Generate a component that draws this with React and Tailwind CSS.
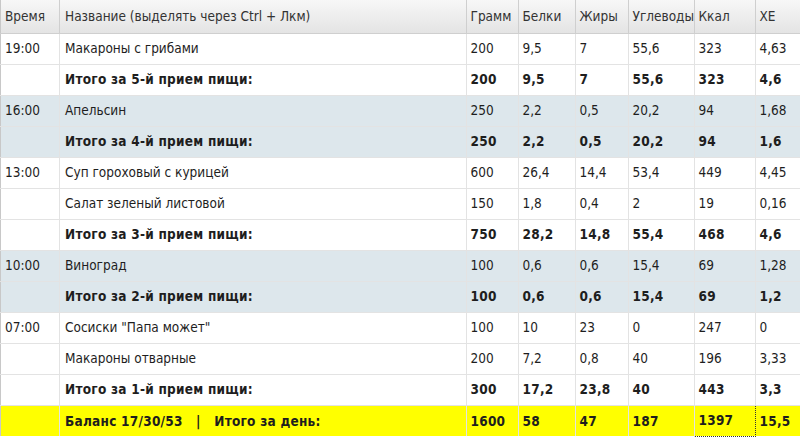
import React from "react";

const rows = [
  { t: "19:00", n: "Макароны с грибами", v: ["200", "9,5", "7", "55,6", "323", "4,63"] },
  { n: "Итого за 5-й прием пищи:", v: ["200", "9,5", "7", "55,6", "323", "4,6"], total: true },
  { t: "16:00", n: "Апельсин", v: ["250", "2,2", "0,5", "20,2", "94", "1,68"], blue: true },
  { n: "Итого за 4-й прием пищи:", v: ["250", "2,2", "0,5", "20,2", "94", "1,6"], total: true, blue: true },
  { t: "13:00", n: "Суп гороховый с курицей", v: ["600", "26,4", "14,4", "53,4", "449", "4,45"] },
  { n: "Салат зеленый листовой", v: ["150", "1,8", "0,4", "2", "19", "0,16"] },
  { n: "Итого за 3-й прием пищи:", v: ["750", "28,2", "14,8", "55,4", "468", "4,6"], total: true },
  { t: "10:00", n: "Виноград", v: ["100", "0,6", "0,6", "15,4", "69", "1,28"], blue: true },
  { n: "Итого за 2-й прием пищи:", v: ["100", "0,6", "0,6", "15,4", "69", "1,2"], total: true, blue: true },
  { t: "07:00", n: "Сосиски \"Папа может\"", v: ["100", "10", "23", "0", "247", "0"] },
  { n: "Макароны отварные", v: ["200", "7,2", "0,8", "40", "196", "3,33"] },
  { n: "Итого за 1-й прием пищи:", v: ["300", "17,2", "23,8", "40", "443", "3,3"], total: true },
];

const headers = ["Грамм", "Белки", "Жиры", "Углеводы", "Ккал", "ХЕ"];
const widths = ["w-[52px]", "w-[57px]", "w-[53px]", "w-[66px]", "w-[61px]", "w-[45px]"];

export default function App() {
  return (
    <div className="w-[800px] h-[437px] overflow-hidden bg-white text-[#1e1e1e] text-[13.5px] font-['Tahoma','DejaVu_Sans_Condensed','DejaVu_Sans',sans-serif]">
      <table className="w-[800px] table-fixed border-collapse border-l border-[#c8c8c8]">
        <colgroup>
          <col className="w-[59px]" />
          <col />
          {widths.map((w, i) => (
            <col key={i} className={w} />
          ))}
        </colgroup>
        <thead>
          <tr className="h-[33px] bg-gradient-to-b from-[#f7f7f7] to-[#e4e4e4] text-[#333]">
            <th className="font-normal text-left pl-[4px] border-r border-b border-[#cfcfcf]">Время</th>
            <th className="font-normal text-left pl-[5px] border-r border-b border-[#cfcfcf] whitespace-nowrap">
              Название (выделять через Ctrl + Лкм)
            </th>
            {headers.map((h, i) => (
              <th
                key={h}
                className={`font-normal text-left pl-[4px] border-b border-[#cfcfcf] whitespace-nowrap overflow-visible ${i < 5 ? "border-r" : ""}`}
              >
                {h}
              </th>
            ))}
          </tr>
        </thead>
        <tbody>
          {rows.map((r, ri) => (
            <tr
              key={ri}
              className={`h-[31px] ${r.blue ? "bg-[#dde7ec]" : "bg-white"} ${r.total ? "font-bold tracking-[0.25px]" : ""}`}
            >
              <td className="pl-[4px] border-r border-b border-[#e3e3e3] font-normal">{r.t || ""}</td>
              <td className="pl-[5px] border-r border-b border-[#e3e3e3] whitespace-nowrap">{r.n}</td>
              {r.v.map((v, i) => (
                <td key={i} className={`pl-[4px] border-b border-[#e3e3e3] ${i < 5 ? "border-r" : ""}`}>
                  {v}
                </td>
              ))}
            </tr>
          ))}
          <tr className="h-[31px] bg-[#ffff00] font-bold tracking-[0.25px]">
            <td className="border-r border-[#e3e3e3]"></td>
            <td className="pl-[5px] border-r border-[#e3e3e3] whitespace-nowrap">
              Баланс 17/30/53&nbsp;&nbsp;&nbsp;|&nbsp;&nbsp;&nbsp;Итого за день:
            </td>
            <td className="pl-[4px] border-r border-[#e3e3e3]">1600</td>
            <td className="pl-[4px] border-r border-[#e3e3e3]">58</td>
            <td className="pl-[4px] border-r border-[#e3e3e3]">47</td>
            <td className="pl-[4px] border-r border-[#e3e3e3]">187</td>
            <td className="pl-[4px] border border-dotted border-[#333]">1397</td>
            <td className="pl-[4px]">15,5</td>
          </tr>
        </tbody>
      </table>
    </div>
  );
}
